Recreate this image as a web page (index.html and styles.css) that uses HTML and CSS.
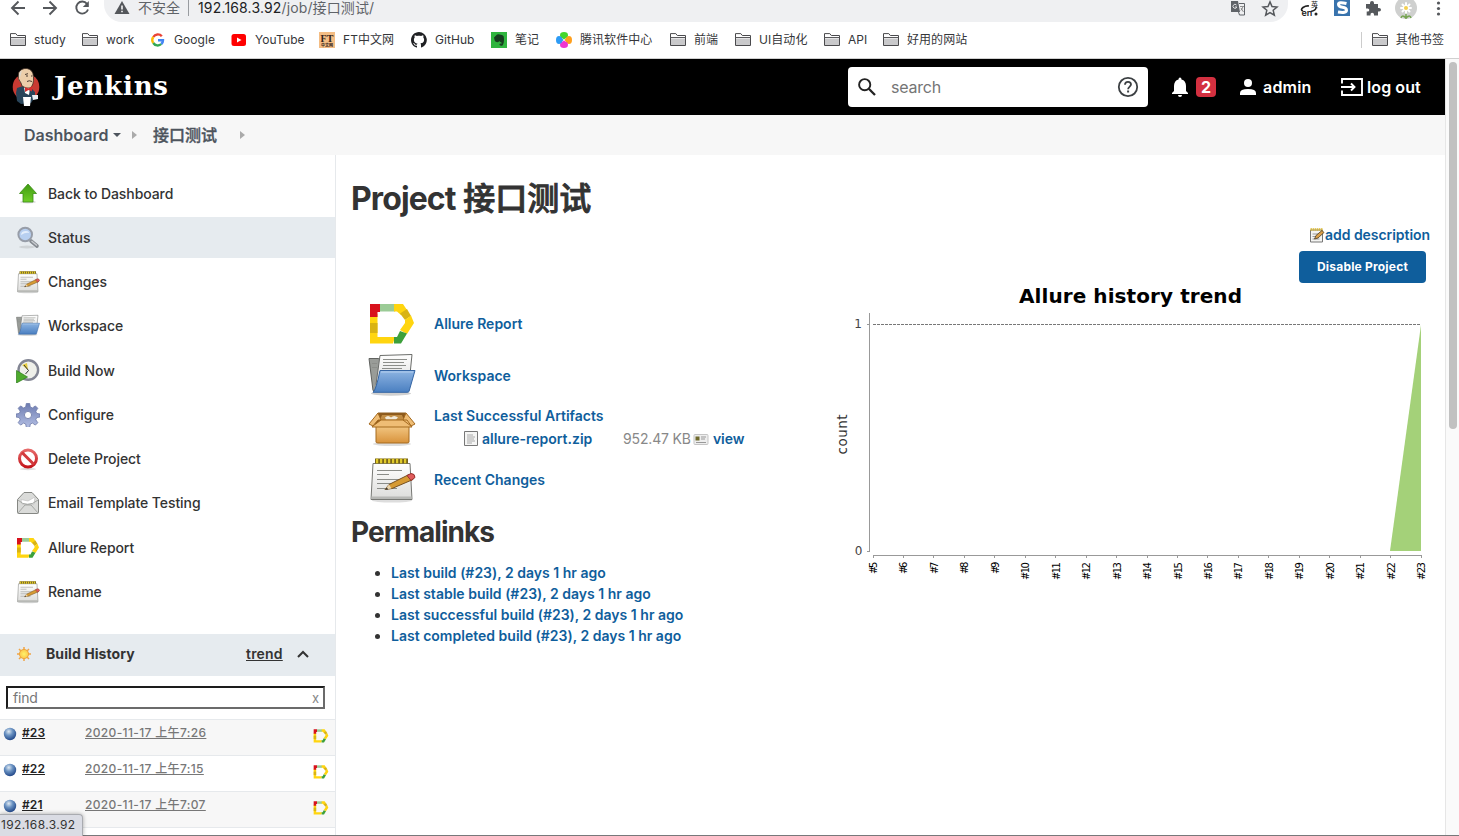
FILE: index.html
```html
<!DOCTYPE html>
<html lang="zh-CN">
<head>
<meta charset="utf-8">
<title>接口测试 [Jenkins]</title>
<link rel="stylesheet" href="styles.css">
</head>
<body>
<svg class="defs" width="0" height="0" aria-hidden="true">
  <defs>
    <linearGradient id="g-blue" x1="0" y1="0" x2="0" y2="1"><stop offset="0" stop-color="#8db4e2"/><stop offset="1" stop-color="#4a7fc1"/></linearGradient>
    <linearGradient id="g-green" x1="0" y1="0" x2="0" y2="1"><stop offset="0" stop-color="#3f9a12"/><stop offset="1" stop-color="#6fce28"/></linearGradient>
    <linearGradient id="g-paper" x1="0" y1="0" x2="0" y2="1"><stop offset="0" stop-color="#ffffff"/><stop offset="1" stop-color="#dcdcda"/></linearGradient>
    <linearGradient id="g-box" x1="0" y1="0" x2="0" y2="1"><stop offset="0" stop-color="#f6cd8b"/><stop offset="1" stop-color="#d8933c"/></linearGradient>
    <radialGradient id="g-ball" cx=".4" cy=".3" r=".7"><stop offset="0" stop-color="#dfe9f2"/><stop offset=".45" stop-color="#6a92c2"/><stop offset="1" stop-color="#23498a"/></radialGradient>
    <radialGradient id="g-sun"><stop offset="0" stop-color="#fff36a"/><stop offset="1" stop-color="#fbc64c"/></radialGradient>
    <linearGradient id="g-red" x1="0" y1="0" x2="0" y2="1"><stop offset="0" stop-color="#e66a6a"/><stop offset="1" stop-color="#c4161c"/></linearGradient>
    <linearGradient id="g-gear" x1="0" y1="0" x2="0" y2="1"><stop offset="0" stop-color="#6d7bb0"/><stop offset="1" stop-color="#b3bfe4"/></linearGradient>
  </defs>
  <symbol id="bm-folder" viewBox="0 0 16 16"><path d="M.5 13.500V1.600h5.300l1.500 1.900h8.200v10z" fill="#fff" stroke="#4a4a4d"/><path d="M1 6.500h14V13H1z" fill="#c9c9cb"/><path d="M.5 5.500h15" stroke="#5a5a5d"/></symbol>
  <symbol id="allure" viewBox="0 0 48 48"><g transform="translate(0 -4)"><path d="M2 18h7.500v23H27l-2 6.500H2z" fill="#ffd50f"/><path d="M2 27h7.500v10H2z" fill="#d9b313"/><path d="M2 8h10v8H9.500v5H2z" fill="#d8111c"/><path d="M12 8h15v7.500H12z" fill="#9bcb96"/><path d="M26 8h9l4 6-6 5-4-3.500h-3z" fill="#ffd50f"/><path d="m32 17.500 7-4.500 4 7-6 4z" fill="#d9b313"/><path d="m37 24 6-4.500 3 7.500-7 11-7-4 5-7z" fill="#ffd50f"/><path d="m32 35 7 2.500-6 10h-7V41h3z" fill="#3da03b"/></g></symbol>
  <symbol id="notepad" viewBox="0 0 48 48"><g transform="translate(0 -.5)"><ellipse cx="24" cy="45" rx="20" ry="2" fill="#ddd"/><path d="M5 8h37l2 36H3z" fill="url(#g-paper)" stroke="#777874"/><path d="M3.500 41h40v2.500h-40z" fill="#b7b8b5"/><path d="M9 15h25M9 19h12M9 24h27M9 28h19M9 33h20" stroke="#8a8c88"/><path d="M7 5.500h33" stroke="#7a6618" stroke-width="5"/><path d="M8 5.500h32" stroke="#dfc92b" stroke-width="4.500" stroke-dasharray="2.200 1.800"/><path d="m17 34 4-5 20-10 4 5-21 9z" fill="#d69a33" stroke="#765020"/><path d="m17 34 4-5 2.500 4z" fill="#ead5ad"/><path d="m17 34 2-2 1 2z" fill="#222"/><path d="m39 20 4-2q4 0 4 4l-4 3z" fill="#e05c5c" stroke="#96302c"/></g></symbol>
  <symbol id="workspace" viewBox="0 0 48 48"><g transform="translate(0 -1.500)"><ellipse cx="23" cy="43" rx="20" ry="2.200" fill="#d0d0d0"/><path d="M1 8h9l3 1-4 32-4-1z" fill="#999c98" stroke="#60625f"/><path d="m12 5 32-1-3 30H8z" fill="url(#g-paper)" stroke="#6b6d6a"/><path d="M15 9h24M15 12h21M15 15h23M14 18h20M4 13h5M4 17h5" stroke="#8c8e8a"/><path d="M12 20h35l-6 21q-.5.800-2 .800H5q3-2 7-21.800z" fill="url(#g-blue)" stroke="#3465a4"/><path d="M13 21.500h32" stroke="#b6d0ef"/></g></symbol>
  <symbol id="box" viewBox="0 0 48 48"><g transform="translate(0 -3)"><ellipse cx="24" cy="43" rx="19" ry="2" fill="#ddd"/><path d="m10 12 28 0 4 11H6z" fill="#8d5a1c" stroke="#8f5f20"/><path d="M14 14h20l2 5H12z" fill="#c18d44"/><path d="M17 16.500q3-3 6 0 3-3 7 0l-2 2H18z" fill="#f2ead9"/><path d="M8 23h33v18q0 1-2 1H10q-2 0-2-1z" fill="url(#g-box)" stroke="#a56a1f"/><path d="m10 12-9 11 4 2 8-6zM38 12l9 11-4 2-8-6zM10 19h29l5 7H4z" fill="#efbd75" stroke="#a56a1f"/></g></symbol>
</svg>

<header class="toolbar">
  <svg class="nav" viewBox="0 0 104 22"><g fill="none" stroke="#55585c" stroke-width="1.900"><path d="M25 8H12M18.500 1.500 12 8l6.500 6.500"/><path d="M43 8h13M49.500 1.500 56 8l-6.500 6.500"/><path d="M87 3.800A6 6 0 1 0 88 9.500"/></g><path d="M88.800 1v6h-6z" fill="#55585c"/></svg>
  <div class="omnibox">
    <svg class="warn" viewBox="0 0 16 16"><path d="M8 1 15.500 14H.5z" fill="#54575b"/><path d="M8 5.500v4M8 10.700v1.500" stroke="#fff" stroke-width="1.500"/></svg>
    <span class="insecure">不安全</span><i class="sep"></i>
    <span class="url"><b>192.168.3.92</b>/job/接口测试/</span>
    <svg class="translate" viewBox="0 0 16 16"><path d="M1 1h7l2 11H1.500Q1 12 1 11.500z" fill="#5f6368"/><path d="M9 3.500h5.500v11.500H9.500L8.500 12" fill="none" stroke="#5f6368"/><path d="M6.500 5a2 2 0 1 0 .4 2H5" fill="none" stroke="#dfe0e2"/><path d="M10 6.500h4M12.800 7q-.5 2-2 3.500M11 8l2.500 4" fill="none" stroke="#777" stroke-width=".8"/></svg>
    <svg class="star" viewBox="0 0 16 16"><path d="m8 1.800 1.900 4.400 4.700.4-3.600 3.100 1.100 4.600L8 11.800l-4.100 2.500L5 9.700 1.400 6.600l4.700-.4z" fill="none" stroke="#55585c" stroke-width="1.400"/></svg>
  </div>
  <svg class="extensions" viewBox="0 0 160 22">
    <path d="M14 11q-3-1 0-3.500 3-2 6-1.500M22 11.500q6-1.500 5-5" fill="none" stroke="#222" stroke-width="1.700"/><circle cx="27" cy="14" r="1.500" fill="#222"/><text x="12.500" y="16" class="ext-text">en</text><text x="22" y="7" class="ext-cjk">英</text>
    <rect x="45" width="16" height="16" fill="#3873ad"/><path d="M57.500 3.500q-8-2-8 .8 0 2.500 4 3t4 3q0 3-8.500 1.700" fill="none" stroke="#fff" stroke-width="3"/>
    <path d="M78 4h3V3q0-2 2-2t2 2v1h4v4h1q2 0 2 1.800T90 11.500h-1v4h-4v-1q0-1.700-1.800-1.700T81.500 14.500v1h-3.800v-4h1q1.600 0 1.600-1.500t-1.600-1.500H77V4z" fill="#55585c"/>
    <circle cx="117" cy="8" r="11" fill="#cfd0cf"/><path d="M117 9v10M112 18q1-4 5 0 4-4 5 0" stroke="#76a451" fill="none" stroke-width="1.500"/><g stroke="#fff" stroke-width="2" stroke-linecap="round"><path d="M117 3v10M112 8h10M113.500 4.500l7 7M120.500 4.500l-7 7"/></g><circle cx="117" cy="8" r="2" fill="#f3cf52"/>
    <g fill="#55585c"><circle cx="149.500" cy="3" r="1.600"/><circle cx="149.500" cy="8.500" r="1.600"/><circle cx="149.500" cy="14" r="1.600"/></g>
  </svg>
</header>

<nav class="bookmarks">
  <div class="bm-list">
    <a><svg><use href="#bm-folder"/></svg>study</a>
    <a><svg><use href="#bm-folder"/></svg>work</a>
    <a class="wide"><svg viewBox="0 0 16 16" fill="none" stroke-width="2.400"><path d="M3.300 5A5.200 5.200 0 0 1 11.800 4.300" stroke="#ea4335"/><path d="M3.300 5a5.200 5.200 0 0 0 0 6" stroke="#fbbc05"/><path d="M3.300 11a5.200 5.200 0 0 0 8 1" stroke="#34a853"/><path d="M11.300 12A5 5 0 0 0 13 8.200H8" stroke="#4285f4"/></svg>Google</a>
    <a><svg viewBox="0 0 16 16"><rect x=".5" y="2" width="14.500" height="12" rx="2.500" fill="#f00"/><path d="m6 5.500 4.500 2.500L6 10.500z" fill="#fff"/></svg>YouTube</a>
    <a><svg viewBox="0 0 16 16"><rect width="16" height="16" fill="#f4bd84"/><text x="8" y="9.500" class="ft">FT</text><text x="8" y="14.500" class="ft-cn">中文网</text></svg>FT中文网</a>
    <a><svg viewBox="0 0 16 16"><path d="M8 0C3.600 0 0 3.600 0 8c0 3.500 2.300 6.500 5.500 7.600.4.100.5-.2.500-.4v-1.500c-2.200.5-2.700-.9-2.700-.9-.4-.9-.9-1.200-.9-1.200-.7-.5.100-.5.100-.5.800.1 1.200.8 1.200.8.700 1.200 1.900.9 2.300.7.100-.5.300-.9.500-1.100-1.800-.2-3.600-.9-3.600-4 0-.9.300-1.600.8-2.100-.1-.2-.4-1 .1-2.100 0 0 .7-.2 2.200.8.600-.2 1.300-.3 2-.3s1.400.1 2 .3c1.500-1 2.200-.8 2.200-.8.400 1.100.2 1.900.1 2.100.5.600.8 1.300.8 2.100 0 3.100-1.900 3.700-3.700 3.900.3.300.6.800.6 1.500v2.200c0 .2.100.5.600.4A8 8 0 0 0 8 0z" fill="#202124"/></svg>GitHub</a>
    <a><svg viewBox="0 0 16 16"><rect width="16" height="16" fill="#2fb43e"/><path d="M3 5.500 5.500 3q1-1 3-.5 3 0 4 1.500c1 3 .5 8-1 9.500-2 1-4-.5-2.500-2l1.500.2v-1.200c-1-.3-1.700-.7-2-1.500-.7 1.700-4 1.500-4.800-.5z" fill="#173d20"/></svg>笔记</a>
    <a><svg viewBox="0 0 16 16"><ellipse cx="8" cy="3.200" rx="4" ry="3.200" fill="#44d62c"/><path d="M5 5h6L8 7.500z" fill="#44d62c"/><ellipse cx="13" cy="8" rx="3" ry="4" fill="#ff9f1c"/><path d="M11 5v6L8.500 8z" fill="#ff9f1c"/><ellipse cx="8" cy="12.800" rx="4" ry="3.200" fill="#ef36d0"/><path d="M5 11h6L8 8.500z" fill="#ef36d0"/><ellipse cx="3" cy="8" rx="3" ry="4" fill="#2d9bf5"/><path d="M5 5v6l2.500-3z" fill="#2d9bf5"/></svg>腾讯软件中心</a>
    <a><svg><use href="#bm-folder"/></svg>前端</a>
    <a><svg><use href="#bm-folder"/></svg>UI自动化</a>
    <a><svg><use href="#bm-folder"/></svg>API</a>
    <a><svg><use href="#bm-folder"/></svg>好用的网站</a>
  </div>
  <a class="bm-other"><svg><use href="#bm-folder"/></svg>其他书签</a>
</nav>

<div class="viewport">
  <div class="page">
    <div class="page-header">
      <svg class="butler" viewBox="0 0 28 40"><circle cx="14" cy="20" r="13.300" fill="#c83a32"/><path d="M5 21l6-2 8 2 4 4v5l-4 6-10 1-4-3-1-8z" fill="#29455a"/><path d="m12 20 6 1-1 7-4-2z" fill="#fff"/><path d="M9 16Q5 12 6.500 6 9 1 15 1.500q6 1 6.500 8 .5 9-3.500 11.500-4 1-8-2z" fill="#edceaa" stroke="#3a2b22" stroke-width=".8"/><path d="M7.500 11Q6 5 10 3.500L8.500 9z" fill="#ddd6cd"/><path d="M14 9h2m3 0h1.500M15 14.500q2-1.500 5 0M13 7.500l3-.8" stroke="#4b3a30" fill="none"/><path d="m13 20 3.500 1.500L20 19v5.500l-3.500-1.500L13 25z" fill="#d32f2f"/><path d="M11 30h8l-1 9h-6z" fill="#fff"/><path d="M20 28h6v4l-5 1z" fill="#e9eff3"/></svg>
      <span class="logo-text">Jenkins</span>
      <div class="search">
        <svg class="lens" viewBox="0 0 20 20"><circle cx="7.700" cy="7.700" r="5.600" fill="none" stroke="#222" stroke-width="1.900"/><path d="m11.800 11.800 6.200 6.200" stroke="#222" stroke-width="2.300"/></svg>
        <span>search</span>
        <svg class="help" viewBox="0 0 22 22"><circle cx="11" cy="11" r="9.200" fill="none" stroke="#3c4043" stroke-width="1.800"/><path d="M8 8.800q0-3 3-3t3 2.700c0 2-2.900 2.300-2.900 4.800" fill="none" stroke="#3c4043" stroke-width="1.800"/><path d="M10.100 14.500h2v2h-2z" fill="#3c4043"/></svg>
      </div>
      <svg class="bell" viewBox="0 0 18 20"><path d="M9 .5q1.500 0 1.500 1.900Q15 3.500 15 9v5l2 2v1H1v-1l2-2V9q0-5.500 4.500-6.600Q7.500.5 9 .5zM7 18h4q0 2-2 2t-2-2z" fill="#fff"/></svg>
      <span class="badge">2</span>
      <svg class="user" viewBox="0 0 16 16"><circle cx="8" cy="4" r="4" fill="#fff"/><path d="M0 16v-2q0-4 8-4t8 4v2z" fill="#fff"/></svg>
      <span class="admin">admin</span>
      <svg class="exit" viewBox="0 0 22 18"><path d="M1 5.500V1h20v16H1v-4.500M0 9h13M10 5.500 13.500 9 10 12.500" fill="none" stroke="#fff" stroke-width="1.900"/></svg>
      <span class="logout">log out</span>
    </div>

    <div class="crumbs"><span class="crumb-dash">Dashboard</span><i class="caret"></i><i class="chev"></i><span class="crumb-job">接口测试</span><i class="chev last"></i></div>

    <div class="columns">
      <aside class="side">
        <ul class="tasks">
          <li><svg viewBox="0 0 24 24"><ellipse cx="12" cy="20" rx="8" ry="1.500" fill="#dcdcdc"/><path d="m12 2 8.500 9.500H17v8.500H7v-8.500H3.500z" fill="url(#g-green)" stroke="#3b8b17" stroke-width=".8"/></svg>Back to Dashboard</li>
          <li class="active"><svg viewBox="0 0 24 24"><ellipse cx="11" cy="21" rx="8" ry="1.500" fill="#cfd3d6"/><path d="m15 15 6 5" stroke="#858a90" stroke-width="3.600" stroke-linecap="round"/><path d="m15.500 15 5.500 4.500" stroke="#c9ccd0" stroke-width="1.400"/><circle cx="9.200" cy="8.500" r="6.800" fill="#b7cff0" stroke="#979da8" stroke-width="2"/><path d="M5 9q0-4 5-4 3 0 3 2-3-1-8 2z" fill="#e4eefb"/></svg>Status</li>
          <li><svg><use href="#notepad"/></svg>Changes</li>
          <li><svg><use href="#workspace"/></svg>Workspace</li>
          <li><svg viewBox="0 0 24 24"><circle cx="12.300" cy="11" r="9.800" fill="#eeefe9" stroke="#828593" stroke-width="2.400"/><path d="m12 11-6-5 5-2z" fill="#e4cb3f"/><path d="m8 6 4.500 5.500M12.500 11.500 9.500 15" stroke="#333" fill="none"/><path d="m.5 11.500 11 6.500L.5 24z" fill="#4eaa2d" stroke="#2c7d1a" stroke-width=".7"/></svg>Build Now</li>
          <li><svg viewBox="0 0 24 24"><path d="M10.300.5h3.400l.6 3.500 2.200.9 2.900-2 2.400 2.400-2 2.900.9 2.200 3.300.6v3l-3.300.6-.9 2.200 2 2.900-2.400 2.400-2.900-2-2.200.9-.6 3.400h-3.400l-.6-3.400-2.200-.9-2.900 2-2.400-2.400 2-2.900-.9-2.200-3.300-.6v-3l3.300-.6.9-2.200-2-2.900 2.400-2.400 2.900 2 2.200-.9z" fill="url(#g-gear)" stroke="#6c78a8" stroke-width=".8"/><circle cx="12" cy="12" r="3.600" fill="#fff" stroke="#7d88b2"/></svg>Configure</li>
          <li><svg viewBox="0 0 24 24"><ellipse cx="12" cy="22" rx="8" ry="1.200" fill="#ddd"/><circle cx="12" cy="11.500" r="8.500" fill="#fff" stroke="url(#g-red)" stroke-width="3"/><path d="m6 5.500 12 12" stroke="#d33a3d" stroke-width="3"/></svg>Delete Project</li>
          <li><svg viewBox="0 0 24 24"><path d="M1.500 8.500 8 1.500h8l6.500 7V21.500q0 1-1 1h-19q-1 0-1-1z" fill="#dadbd9" stroke="#858783"/><path d="M5 8.500 12 10l7-4-1 7H6z" fill="#fff" stroke="#bbb" stroke-width=".6"/><path d="M2 9q9 9 20 0M2 22l7-8M22 22l-7-8M9 14h6" fill="none" stroke="#a5a7a4"/></svg>Email Template Testing</li>
          <li><svg><use href="#allure"/></svg>Allure Report</li>
          <li><svg><use href="#notepad"/></svg>Rename</li>
        </ul>

        <div class="history-head">
          <svg class="sun" viewBox="0 0 16 16"><g stroke="#f0a548" stroke-width="1.500"><path d="M8 1v14M1 8h14M3 3l10 10M13 3 3 13"/></g><circle cx="8" cy="8" r="4.600" fill="url(#g-sun)" stroke="#f0a53a"/></svg>
          <span class="history-title">Build History</span><a class="trend">trend</a>
          <svg class="up" viewBox="0 0 12 8"><path d="m1 7 5-5 5 5" fill="none" stroke="#333" stroke-width="2"/></svg>
        </div>
        <div class="find"><span>find</span><span class="clear">x</span></div>
        <div class="builds">
          <div class="build odd"><svg class="ball" viewBox="0 0 14 14"><circle cx="7" cy="7" r="6.200" fill="url(#g-ball)"/></svg><a class="num">#23</a><a class="date">2020-11-17 上午7:26</a><svg class="mini"><use href="#allure"/></svg></div>
          <div class="build"><svg class="ball" viewBox="0 0 14 14"><circle cx="7" cy="7" r="6.200" fill="url(#g-ball)"/></svg><a class="num">#22</a><a class="date">2020-11-17 上午7:15</a><svg class="mini"><use href="#allure"/></svg></div>
          <div class="build odd"><svg class="ball" viewBox="0 0 14 14"><circle cx="7" cy="7" r="6.200" fill="url(#g-ball)"/></svg><a class="num">#21</a><a class="date">2020-11-17 上午7:07</a><svg class="mini"><use href="#allure"/></svg></div>
          <div class="build"></div>
        </div>
      </aside>

      <main class="main">
        <div class="left">
          <h1><span class="tight">Project</span> <span class="job">接口测试</span></h1>
          <div class="links">
            <svg><use href="#allure"/></svg><a>Allure Report</a>
            <svg><use href="#workspace"/></svg><a>Workspace</a>
            <svg><use href="#box"/></svg>
            <div class="artifacts">
              <a>Last Successful Artifacts</a>
              <div class="file"><svg class="doc" viewBox="0 0 16 16"><path d="M1.500.5h13v14h-13z" fill="#f5f5f4" stroke="#777"/><path d="M4 4h6M4 6h8M4 8h7M4 10h8M4 12h5" stroke="#aaa"/></svg><a class="zip">allure-report.zip</a><span class="size">952.47 KB</span><svg class="card" viewBox="0 0 16 16"><rect x="1" y="3.500" width="14" height="10" rx="1" fill="#eee" stroke="#c5c5c5"/><path d="M2.500 5.500h4v4h-4z" fill="#6f6a2c"/><path d="M8 6h5M8 8h4M3 11.500h10" stroke="#999"/></svg><a class="view">view</a></div>
            </div>
            <svg><use href="#notepad"/></svg><a>Recent Changes</a>
          </div>
          <h2>Permalinks</h2>
          <ul class="perma">
            <li><a>Last build (#23), 2 days 1 hr ago</a></li>
            <li><a>Last stable build (#23), 2 days 1 hr ago</a></li>
            <li><a>Last successful build (#23), 2 days 1 hr ago</a></li>
            <li><a>Last completed build (#23), 2 days 1 hr ago</a></li>
          </ul>
        </div>
        <div class="right">
          <div class="describe"><svg viewBox="0 0 16 16"><path d="M1.500 3h12v12h-12z" fill="#f4f4f2" stroke="#777"/><path d="M3.500 7h6M3.500 9.500h4M3.500 12h7" stroke="#999"/><path d="M1.500 2.500h12" stroke="#d8b83a" stroke-width="2.500" stroke-dasharray="1.500 .6"/><path d="m5.500 12 1.500-3.500 6-5 2 2-6 5.500z" fill="#dba04a" stroke="#4d3a20" stroke-width=".8"/></svg><a>add description</a></div>
          <button class="disable">Disable Project</button>
          <svg class="chart" viewBox="830 283 610 310">
            <text x="1019" y="303" class="chart-title" textLength="223">Allure history trend</text>
            <path d="M869.500 313v238M867 324.500h3M867 551.500h3" class="axis"/>
            <path d="M873 324.500h548" stroke="#777" stroke-dasharray="3 1"/>
            <path d="M1390 551 1421 325V551z" fill="#a4d179"/>
            <path d="M873 555.500h549" class="axis"/>
            <path d="M873.500 556v2M903.500 556v2M933.500 556v2M964.500 556v2M994.500 556v2M1025.500 556v2M1055.500 556v2M1086.500 556v2M1116.500 556v2M1147.500 556v2M1177.500 556v2M1207.500 556v2M1238.500 556v2M1268.500 556v2M1299.500 556v2M1329.500 556v2M1360.500 556v2M1390.500 556v2M1421.500 556v2" class="axis"/>
            <text x="862" y="328" class="tick" text-anchor="end">1</text><text x="862.500" y="555" class="tick" text-anchor="end">0</text>
            <text transform="translate(847 454.500) rotate(-90)" class="count" textLength="40">count</text>
            <g class="xlabels">
              <text transform="translate(876.500 574) rotate(-90)" textLength="12.500">#5</text><text transform="translate(907 574) rotate(-90)" textLength="12.500">#6</text><text transform="translate(937.500 574) rotate(-90)" textLength="12.500">#7</text><text transform="translate(968 574) rotate(-90)" textLength="12.500">#8</text><text transform="translate(998.500 574) rotate(-90)" textLength="12.500">#9</text><text transform="translate(1029 580) rotate(-90)" textLength="18">#10</text><text transform="translate(1059.500 580) rotate(-90)" textLength="18">#11</text><text transform="translate(1090 580) rotate(-90)" textLength="18">#12</text><text transform="translate(1120.500 580) rotate(-90)" textLength="18">#13</text><text transform="translate(1151 580) rotate(-90)" textLength="18">#14</text><text transform="translate(1181.500 580) rotate(-90)" textLength="18">#15</text><text transform="translate(1211.500 580) rotate(-90)" textLength="18">#16</text><text transform="translate(1242 580) rotate(-90)" textLength="18">#17</text><text transform="translate(1272.500 580) rotate(-90)" textLength="18">#18</text><text transform="translate(1303 580) rotate(-90)" textLength="18">#19</text><text transform="translate(1333.500 580) rotate(-90)" textLength="18">#20</text><text transform="translate(1364 580) rotate(-90)" textLength="18">#21</text><text transform="translate(1394.500 580) rotate(-90)" textLength="18">#22</text><text transform="translate(1425 580) rotate(-90)" textLength="18">#23</text>
            </g>
          </svg>
        </div>
      </main>
    </div>
  </div>
  <div class="scrollbar"><div class="thumb"></div></div>
</div>
<div class="window-edge"></div>
<div class="status-bubble">192.168.3.92</div>
</body>
</html>
```
FILE: styles.css
```css
* { box-sizing: border-box; }
body {
  margin: 0; width: 1459px; height: 836px; overflow: hidden; position: relative;
  display: flex; flex-direction: column; background: #fff; color: #333;
  font: 500 14px/20px Inter, "Noto Sans CJK SC", sans-serif;
}
svg { display: block; flex: none; }
.defs { position: absolute; }
a { color: #0f5e9c; }

/* browser toolbar */
.toolbar { display: flex; height: 22px; flex: none; }
.nav { width: 104px; height: 22px; }
.omnibox {
  width: 1184px; height: 22px; background: #eff0f2; border-radius: 0 0 18px 18px;
  display: flex; align-items: flex-start; padding-left: 10px; font-weight: 400;
}
.warn { width: 16px; height: 16px; }
.insecure { margin-left: 8px; width: 43px; line-height: 16px; color: #5f6368; }
.sep { width: 1px; height: 16px; background: #999ca0; margin: 0 9px 0 7px; }
.url { line-height: 16px; width: 1031px; color: #5f6368; letter-spacing: .12px; }
.url b { color: #202124; font-weight: 400; letter-spacing: .16px; }
.translate { width: 16px; height: 16px; margin-left: 1px; }
.star { width: 18px; height: 17px; margin-left: 15px; }
.extensions { width: 160px; height: 22px; margin-left: 1px; }
.ext-text { font: 600 9px Inter, sans-serif; fill: #222; }
.ext-cjk { font: 7px "Noto Sans CJK SC", sans-serif; fill: #222; }

/* bookmarks */
.bookmarks { display: flex; justify-content: space-between; height: 37px; flex: none; padding: 10px 14px 0 10px; border-bottom: 1px solid #d0d0d0; }
.bm-list { display: grid; grid-template-columns: 72px 67px 82px 88px 92px 80px 65px 114px 65px 89px 59px 90px; }
.bookmarks a { display: flex; gap: 8px; height: 16px; color: #35363a; font-size: 12px; font-weight: 400; line-height: 16px; white-space: nowrap; letter-spacing: .06px; }
.bookmarks svg { width: 16px; height: 16px; }
.bookmarks .wide { padding-left: 1px; }
.bookmarks .bm-other { border-left: 1px solid #ccc; padding: 0 1px 0 10px; }
.ft { font: bold 10px "Liberation Serif", serif; text-anchor: middle; fill: #33241b; }
.ft-cn { font: bold 4px "Noto Sans CJK SC", sans-serif; text-anchor: middle; fill: #33241b; }

.viewport { display: flex; flex: 1; min-height: 0; }
.page { width: 1445px; display: flex; flex-direction: column; }
.scrollbar { width: 14px; background: #fafafa; border-left: 1px solid #e6e6e6; padding: 3px 0 0 3px; }
.thumb { width: 8px; height: 367px; border-radius: 4px; background: #c1c1c1; }

/* header */
.page-header { height: 56px; flex: none; background: #000; color: #fff; display: flex; align-items: center; font-size: 16px; font-weight: 600; }
.butler { width: 28px; height: 40px; margin-left: 12px; }
.logo-text { width: 794px; margin-left: 14px; padding-bottom: 2px; font: bold 26px/30px "DejaVu Serif", serif; letter-spacing: .8px; }
.search { width: 300px; height: 40px; background: #fff; border-radius: 4px; display: flex; align-items: center; padding: 0 9px; color: #757575; font-weight: 400; }
.lens { width: 20px; height: 20px; }
.search span { margin-left: 14px; width: 227px; letter-spacing: -.2px; }
.help { width: 22px; height: 22px; }
.bell { width: 18px; height: 20px; margin-left: 23px; }
.badge { width: 20px; height: 20px; margin-left: 7px; border-radius: 4px; background: #d33040; text-align: center; line-height: 20px; font-weight: 700; }
.user { width: 16px; height: 16px; margin-left: 24px; }
.admin { margin-left: 7px; width: 78px; letter-spacing: .2px; }
.exit { width: 22px; height: 18px; }
.logout { margin-left: 4px; white-space: nowrap; letter-spacing: .1px; }

.crumbs { height: 40px; flex: none; background: #f7f7f7; display: flex; align-items: center; padding-left: 24px; font-size: 16px; font-weight: 600; color: #4d545d; }
.crumb-dash { width: 89px; }
.caret { border: 4.500px solid transparent; border-top: 4.500px solid #4d545d; border-bottom: 0; }
.chev { margin-left: 11px; border: 4px solid transparent; border-left: 5px solid #aaa; border-right: 0; }
.crumb-job { margin-left: 16px; width: 72px; font-weight: 500; -webkit-text-stroke: .35px #4d545d; }
.chev.last { margin-left: 15px; }

.columns { display: flex; flex: 1; min-height: 0; }
.side { width: 336px; border-right: 1px solid #e6e9ec; flex: none; overflow: hidden; }
.tasks { list-style: none; margin: 18px 0 0; padding: 0; display: flex; flex-direction: column; gap: 3.250px; letter-spacing: -.08px; }
.tasks li { height: 41px; display: flex; align-items: center; gap: 8px; padding-left: 16px; }
.tasks svg { width: 24px; height: 24px; }
.tasks .active { background: #e6ebef; letter-spacing: 0; }

.history-head { margin-top: 22px; height: 42px; background: #e6ebef; display: flex; align-items: center; padding: 0 0 2px 16px; font-weight: 700; }
.sun { width: 16px; height: 16px; }
.history-title { margin-left: 14px; width: 200px; letter-spacing: .08px; }
.trend { color: #333; text-decoration: underline; width: 51px; font-weight: 600; letter-spacing: .2px; }
.up { width: 12px; height: 8px; }
.find { margin: 10px 10px 10px 6px; height: 23px; border: 2px solid #6b6b6b; border-top-color: #1d1d1d; border-left-color: #1d1d1d; display: flex; justify-content: space-between; align-items: center; padding: 0 4px 0 5px; font-weight: 400; color: #777; letter-spacing: -.2px; }
.clear { font-size: 13px; color: #888; }
.build { height: 36px; border-top: 1px solid #e6e9ec; display: flex; padding-left: 3px; font-size: 12px; line-height: 16px; }
.build.odd { background: #f7f7f7; }
.ball { width: 14px; height: 14px; margin-top: 7px; }
.num { margin: 5px 0 0 5px; width: 63px; color: #222; font-weight: 600; text-decoration: underline; letter-spacing: .1px; }
.date { margin-top: 5px; width: 228px; color: #777; text-decoration: underline; letter-spacing: .35px; }
.mini { width: 16px; height: 16px; margin-top: 8px; }

/* main */
.main { flex: 1; display: flex; padding-left: 15px; }
.left { width: 479px; }
h1 { margin: 24px 0 79px; font-size: 32px; line-height: 40px; font-weight: 500; white-space: nowrap; word-spacing: -1px; }
.tight { font-weight: 700; letter-spacing: -.9px; }
.job { -webkit-text-stroke: .9px #333; }
.links { display: grid; grid-template-columns: 66px 1fr; grid-auto-rows: 52px; align-items: center; padding-left: 17px; font-weight: 600; }
.links > svg { width: 48px; height: 48px; }
.artifacts { display: flex; flex-direction: column; gap: 3px; padding-bottom: 2px; }
.file { display: flex; align-items: center; padding-left: 29px; white-space: nowrap; }
.doc { width: 16px; height: 16px; }
.zip { margin-left: 3px; width: 141px; }
.size { width: 70px; font-weight: 400; color: #888; letter-spacing: -.15px; }
.card { width: 16px; height: 16px; }
.view { margin-left: 4px; letter-spacing: -.1px; }
h2 { margin: 9px 0 13px; font-size: 28px; line-height: 34px; font-weight: 700; letter-spacing: -.95px; }
.perma { margin: 0; padding-left: 40px; font-weight: 600; line-height: 21px; letter-spacing: .01px; }
.right { width: 610px; padding-top: 70px; display: flex; flex-direction: column; align-items: flex-end; }
.describe { display: flex; align-items: center; margin-right: 10px; font-weight: 600; white-space: nowrap; letter-spacing: -.05px; }
.describe svg { width: 16px; height: 16px; }
.disable { margin: 6px 14px 0 0; width: 127px; height: 32px; padding: 0 0 2px; border: 0; border-radius: 4px; background: #0f5e9c; color: #fff; font: 700 12px Inter, sans-serif; letter-spacing: .2px; }
.chart { width: 610px; height: 310px; }
.chart-title { font: bold 20px "DejaVu Sans", sans-serif; fill: #000; }
.axis { stroke: #999; fill: none; }
.tick { font: 12px "DejaVu Sans", sans-serif; fill: #444; }
.count { font: 13.500px "DejaVu Sans", sans-serif; fill: #333; }
.xlabels { font: 10px "DejaVu Sans", sans-serif; fill: #000; }

/* overlays */
.window-edge { position: absolute; left: 0; bottom: 0; width: 100%; height: 1px; background: #77787a; }
.status-bubble { position: absolute; left: 0; bottom: 0; width: 83px; height: 22px; padding-left: 1px; background: #dadce4; border: 1px solid #a9abb0; border-left: 0; border-bottom: 0; border-radius: 0 4px 0 0; box-shadow: 0 0 4px #0005; font-size: 12px; font-weight: 400; line-height: 20px; letter-spacing: .38px; }
```
